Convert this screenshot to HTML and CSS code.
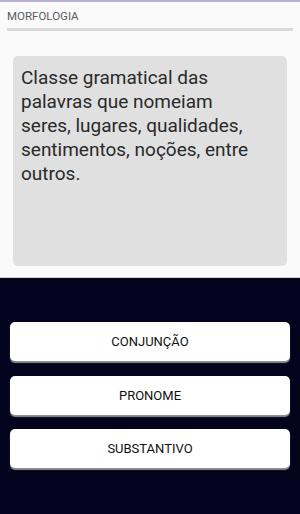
FILE: index.html
```html
<!DOCTYPE html>
<html lang="pt">
  <head>
    <meta charset="UTF-8" />
    <meta name="viewport" content="width=device-width, initial-scale=1.0" />
    <title>Morfologia</title>
    <link rel="stylesheet" href="styles.css">
  </head>
  <body>
    <div class="topo">
      <p class="titulo">MORFOLOGIA</p>
      <div class="progresso"></div>
      <div class="cartao">
        <p class="pergunta">Classe gramatical das palavras que nomeiam seres, lugares, qualidades, sentimentos, noções, entre outros.</p>
      </div>
    </div>
    <div class="respostas">
      <button class="opcao">CONJUNÇÃO</button>
      <button class="opcao">PRONOME</button>
      <button class="opcao">SUBSTANTIVO</button>
    </div>
  </body>
</html>
```
FILE: styles.css
```css
* {
  box-sizing: border-box;
  padding: 0;
  margin: 0;
}
html,
body {
  height: 100%;
}
body {
  font-family: Roboto, "Noto Sans", sans-serif;
  background-color: #03031e;
  display: flex;
  flex-direction: column;
}
.topo {
  height: 278px;
  background-color: #fafafa;
  border-top: 2px solid #b6aed4;
  padding: 0 7px;
  border-bottom: 1px solid #cfcfcf;
}
.titulo {
  font-size: 11.5px;
  line-height: 13px;
  color: #5a5a5a;
  padding-top: 8px;
}
.progresso {
  height: 3px;
  background-color: #d9d9d9;
  margin-top: 5px;
}
.cartao {
  margin: 25px 6px 0;
  height: 210px;
  background-color: #e0e0e0;
  border-radius: 5px;
  padding: 10px 20px 10px 8px;
}
.pergunta {
  font-size: 19px;
  line-height: 24px;
  color: #2a2a2a;
}
.respostas {
  display: flex;
  flex-direction: column;
  gap: 14.5px;
  padding: 44px 10px 0;
}
.opcao {
  height: 39px;
  width: 100%;
  border: none;
  border-radius: 5px;
  background-color: #ffffff;
  box-shadow: 0 2px 1px #8e8e8e;
  font-family: Roboto, "Noto Sans", sans-serif;
  font-size: 13px;
  font-weight: 400;
  color: #111111;
}
```
